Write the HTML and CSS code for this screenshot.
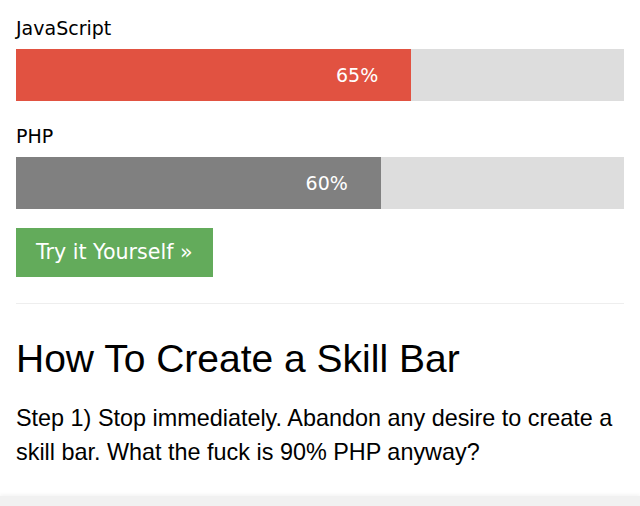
FILE: index.html
```html
<!DOCTYPE html>
<html lang="en">
<head>
    <meta charset="UTF-8">
    <meta name="viewport" content="width=device-width, initial-scale=1.0">
    <title>Skill Bar</title>
    <link rel="stylesheet" href="styles.css">
</head>
<body>

    <div class="page">
        <div class="skill-label">JavaScript</div>
        <div class="skill-track">
            <div class="skill-fill js" style="width: 65%;">65%</div>
        </div>

        <div class="skill-label">PHP</div>
        <div class="skill-track">
            <div class="skill-fill php" style="width: 60%;">60%</div>
        </div>

        <a class="try-button" href="#">Try it Yourself &raquo;</a>

        <hr class="divider">

        <h2 class="title">How To Create a Skill Bar</h2>
        <p class="step">Step 1) Stop immediately. Abandon any desire to create a skill bar. What the fuck is 90% PHP anyway?</p>
    </div>

    <div class="footer-band"></div>

</body>
</html>
```

FILE: styles.css
```css
body {
    margin: 0;
    background-color: #fff;
    color: #000;
}

.page {
    padding: 16px 16px 0;
}

.skill-label {
    font-family: 'DejaVu Sans', Verdana, sans-serif;
    font-size: 19px;
    line-height: 24px;
    margin-bottom: 9px;
}

.skill-track {
    background-color: #dddddd;
    height: 52px;
    margin-bottom: 23px;
}

.skill-fill {
    height: 100%;
    box-sizing: border-box;
    padding-right: 33px;
    text-align: right;
    color: #fff;
    font-family: 'DejaVu Sans', Verdana, sans-serif;
    font-size: 19px;
    line-height: 52px;
}

.js {
    background-color: #e15241;
}

.php {
    background-color: #808080;
}

.skill-track:last-of-type {
    margin-bottom: 0;
}

.try-button {
    display: inline-block;
    margin-top: 19px;
    height: 49px;
    padding: 0 20px;
    background-color: #63ab5b;
    color: #fff;
    font-family: 'DejaVu Sans', Verdana, sans-serif;
    font-size: 20.6px;
    line-height: 49px;
    text-decoration: none;
}

.divider {
    border: none;
    border-top: 1px solid #eeeeee;
    margin: 26px 0 0;
}

.title {
    font-family: 'Liberation Sans', Arial, sans-serif;
    font-weight: normal;
    font-size: 39px;
    line-height: 44px;
    margin: 33px 0 0;
}

.step {
    font-family: 'Liberation Sans', Arial, sans-serif;
    font-size: 23.4px;
    line-height: 34px;
    margin: 20px 0 0;
}

.footer-band {
    margin-top: 27px;
    height: 20px;
    background-color: #f1f1f1;
    box-shadow: 0 -2px 3px #f6f6f6;
}
```
